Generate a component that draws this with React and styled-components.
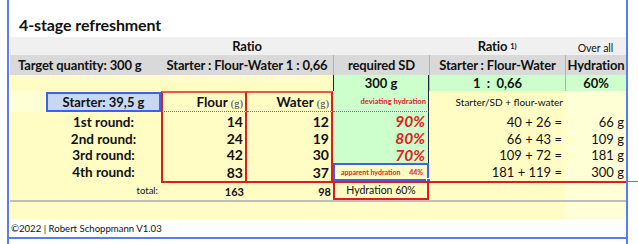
import React from "react";
import styled, { createGlobalStyle } from "styled-components";

const FONT = `Lato, "Liberation Sans", Arial, sans-serif`;
const COLS = "36px 115px 86px 86px 96px 136px 61px";

const C = {
  frame: "#5b7bf5",
  grey1: "#f0f0f0",
  grey2: "#d9d9d9",
  yellow: "#fffcc4",
  paleYellow: "#ffffd6",
  green: "#ccffcc",
  sep: "#9fb2ec",
  red: "#e21b1b",
  orange: "#ee5a3a",
  starterFill: "#c6d9f1",
  starterLine: "#3a62ee",
  text: "#111",
};

const GlobalStyle = createGlobalStyle`
  html, body {
    margin: 0;
    padding: 0;
    background: #fff;
  }
  body {
    font-family: ${FONT};
    color: ${C.text};
  }
`;

const Page = styled.div`
  width: 638px;
  height: 244px;
  overflow: hidden;
  padding-left: 7px;
  box-sizing: border-box;
`;

const Frame = styled.div`
  position: relative;
  width: 621px;
  height: 244px;
  box-sizing: border-box;
  padding-left: 1px;
  border-left: 2px solid ${C.frame};
  border-right: 2px solid ${C.frame};
`;

const Title = styled.h1`
  margin: 0;
  height: 37px;
  box-sizing: border-box;
  display: flex;
  align-items: flex-end;
  padding: 0 0 3px 9px;
  font-size: 16px;
  font-weight: 700;
  letter-spacing: -0.1px;
`;

const Band = styled.div`
  display: grid;
  grid-template-columns: ${COLS};
  height: ${(p) => p.$h}px;
  background: ${(p) => p.$bg || C.yellow};
  position: relative;
`;

const TotalBand = styled(Band)`
  &::after {
    content: "";
    position: absolute;
    top: 0;
    right: -14px;
    width: 12px;
    height: 1px;
    background: ${C.frame};
  }
`;

const Cell = styled.div`
  grid-column: span ${(p) => p.$span || 1};
  display: flex;
  align-items: center;
  justify-content: ${(p) =>
    p.$align === "right" ? "flex-end" : p.$align === "left" ? "flex-start" : "center"};
  box-sizing: border-box;
  white-space: nowrap;
  min-width: 0;
  background: ${(p) => p.$bg || "transparent"};
`;

const HeadCell = styled(Cell)`
  font-size: 13px;
  font-weight: 700;
  letter-spacing: -0.15px;
  border-left: ${(p) => (p.$sep ? `1px solid ${C.sep}` : "none")};
  padding-left: ${(p) => (p.$pad ? "8px" : 0)};
`;

const SmallHead = styled(Cell)`
  font-size: 10.5px;
  padding-top: 3px;
`;

const Sup = styled.sup`
  font-size: 7.5px;
  margin-left: 3px;
  vertical-align: 6px;
`;

const GreenCell = styled(Cell)`
  background: ${C.green};
  font-size: 13px;
  font-weight: 700;
  border-bottom: 1px solid ${C.sep};
  border-left: 1px solid ${(p) => (p.$dark ? "#222" : C.sep)};
  border-right: ${(p) => (p.$dark ? "1px solid #223" : "none")};
`;

const StarterBox = styled(Cell)`
  background: ${C.starterFill};
  border: 2px solid ${C.starterLine};
  font-size: 13px;
  font-weight: 700;
  margin-top: 1px;
`;

const AmountHead = styled(Cell)`
  font-size: 13.5px;
  font-weight: 700;
  padding-right: 2px;
  border-top: 2px solid ${C.orange};
  border-left: ${(p) => (p.$first ? `2px solid ${C.red}` : "none")};
  border-right: 2px solid ${C.red};
  border-bottom: 1px dotted #777;
`;

const Unit = styled.span`
  font-family: "Liberation Serif", serif;
  font-weight: 400;
  font-size: 10.5px;
  color: #444;
  margin-left: 3px;
  padding-top: 2px;
`;

const Amount = styled(Cell)`
  font-size: 14px;
  font-weight: 700;
  padding-right: 2px;
  border-left: ${(p) => (p.$first ? `2px solid ${C.red}` : "none")};
  border-right: 2px solid ${C.red};
  border-bottom: ${(p) => (p.$last ? "none" : "1px dotted #777")};
`;

const RoundLabel = styled(Cell)`
  font-size: 13.5px;
  font-weight: 700;
`;

const HydraHead = styled(Cell)`
  background: ${C.green};
  color: ${C.red};
  font-size: 7.6px;
  font-weight: 700;
  padding-right: 2px;
  border-right: 1px solid #223;
  border-bottom: 1px dotted #777;
`;

const Percent = styled(Cell)`
  background: ${C.green};
  color: ${C.red};
  font-size: 15.5px;
  font-weight: 700;
  font-style: italic;
  padding-right: 3px;
  border-right: 1px solid #223;
  border-bottom: ${(p) => (p.$last ? "none" : "1px dotted #777")};
`;

const Apparent = styled(Cell)`
  position: relative;
  justify-content: space-between;
  border: 2px solid ${C.starterLine};
  color: ${C.red};
  font-size: 7px;
  font-weight: 700;
  padding: 0 4px 0 6px;

  &::after {
    content: "";
    position: absolute;
    right: -4px;
    bottom: -4px;
    width: 5px;
    height: 5px;
    background: ${C.starterLine};
    border: 1px solid #fff;
    box-sizing: border-box;
  }
`;

const Note = styled(Cell)`
  font-size: 10px;
  padding-right: 2px;
`;

const SumCell = styled(Cell)`
  font-size: 13px;
  padding-right: 3px;
`;

const TotalCell = styled(Cell)`
  font-size: 13px;
  padding-right: 2px;
  background: ${C.paleYellow};
`;

const TotalLabel = styled(Cell)`
  font-size: 9.5px;
  padding-right: 3px;
`;

const TotalNum = styled(Cell)`
  font-size: 11px;
  font-weight: 700;
  padding-right: ${(p) => p.$pr || 2}px;
  border-top: 2px solid ${C.red};
`;

const HydraTotal = styled(Cell)`
  font-size: 10.5px;
  border: 2px solid ${C.red};
  padding-bottom: 1px;
`;

const RedTop = styled(Cell)`
  border-top: 2px solid ${C.red};
  background: ${(p) => p.$bg || "transparent"};
`;

const Divider = styled.div`
  height: 2px;
  background: #bdbdbd;
`;

const Footer = styled.div`
  height: 18px;
  display: flex;
  align-items: center;
  padding: 1px 0 0 1px;
  box-sizing: border-box;
  font-size: 9.6px;
`;

const BottomLine = styled.div`
  height: 2px;
  background: ${C.frame};
  margin-left: -1px;
`;

const rounds = [
  { label: "1st round:", flour: 14, water: 12, pct: "90%", sum: "40 + 26 =", total: "66 g" },
  { label: "2nd round:", flour: 24, water: 19, pct: "80%", sum: "66 + 43 =", total: "109 g" },
  { label: "3rd round:", flour: 42, water: 30, pct: "70%", sum: "109 + 72 =", total: "181 g" },
  { label: "4th round:", flour: 83, water: 37, pct: null, sum: "181 + 119 =", total: "300 g" },
];

export default function App() {
  return (
    <Page>
      <GlobalStyle />
      <Frame>
        <Title>4-stage refreshment</Title>

        <Band $h={18} $bg={C.grey1}>
          <Cell $span={2} />
          <HeadCell $span={2}>Ratio</HeadCell>
          <Cell />
          <HeadCell>
            Ratio<Sup>1)</Sup>
          </HeadCell>
          <SmallHead>Over all</SmallHead>
        </Band>

        <Band $h={20} $bg={C.grey2}>
          <HeadCell $span={2} $align="left" $pad>
            Target quantity: 300 g
          </HeadCell>
          <HeadCell $span={2}>Starter : Flour-Water 1 : 0,66</HeadCell>
          <HeadCell $sep>required SD</HeadCell>
          <HeadCell $sep>Starter : Flour-Water</HeadCell>
          <HeadCell $sep>Hydration</HeadCell>
        </Band>

        <Band $h={16}>
          <Cell $span={4} />
          <GreenCell $dark>300 g</GreenCell>
          <GreenCell>1&nbsp; : &nbsp;0,66</GreenCell>
          <GreenCell>60%</GreenCell>
        </Band>

        <Band $h={21}>
          <Cell $bg={C.paleYellow} />
          <StarterBox>Starter: 39,5 g</StarterBox>
          <AmountHead $first $align="right">
            Flour<Unit>(g)</Unit>
          </AmountHead>
          <AmountHead $align="right">
            Water<Unit>(g)</Unit>
          </AmountHead>
          <HydraHead $align="right">deviating hydration</HydraHead>
          <Note $align="right">Starter/SD + flour-water</Note>
          <TotalCell />
        </Band>

        {rounds.map((r, i) => {
          const last = i === rounds.length - 1;
          return (
            <Band $h={last ? 18 : 17} key={r.label}>
              <Cell />
              <RoundLabel>{r.label}</RoundLabel>
              <Amount $first $last={last} $align="right">
                {r.flour}
              </Amount>
              <Amount $last={last} $align="right">
                {r.water}
              </Amount>
              {r.pct ? (
                <Percent $last={i === 2} $align="right">
                  {r.pct}
                </Percent>
              ) : (
                <Apparent>
                  <span>apparent hydration</span>
                  <span>44%</span>
                </Apparent>
              )}
              <SumCell $align="right">{r.sum}</SumCell>
              <TotalCell $align="right">{r.total}</TotalCell>
            </Band>
          );
        })}

        <TotalBand $h={19}>
          <Cell />
          <TotalLabel $align="right">total:</TotalLabel>
          <TotalNum $align="right" $pr={3}>
            163
          </TotalNum>
          <TotalNum $align="right">98</TotalNum>
          <HydraTotal>Hydration 60%</HydraTotal>
          <RedTop />
          <RedTop $bg={C.paleYellow} />
        </TotalBand>

        <Divider />
        <Band $h={17}>
          <Cell $span={6} />
          <Cell $bg={C.paleYellow} />
        </Band>

        <Footer>©2022 | Robert Schoppmann V1.03</Footer>
        <BottomLine />
      </Frame>
    </Page>
  );
}
